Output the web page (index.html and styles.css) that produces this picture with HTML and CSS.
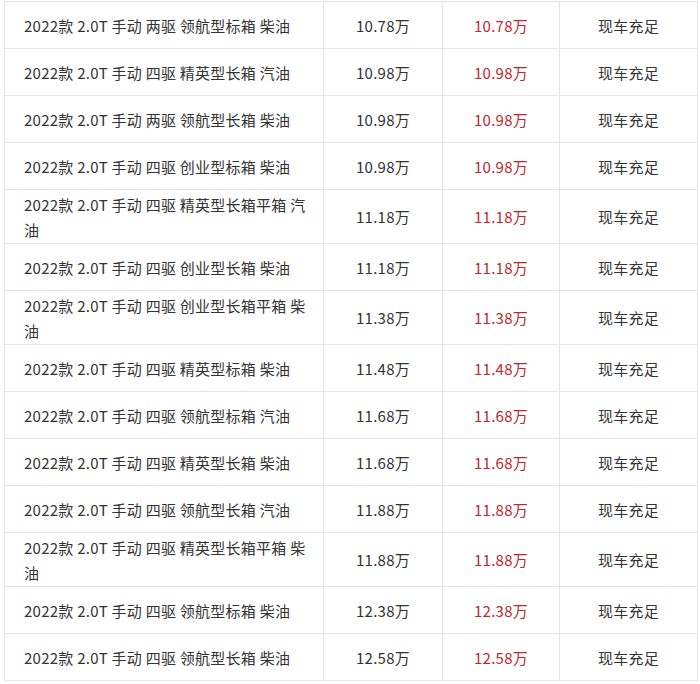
FILE: index.html
```html
<!DOCTYPE html>
<html lang="zh-CN">
<head>
    <meta charset="UTF-8">
    <meta name="viewport" content="width=device-width, initial-scale=1.0">
    <title>2022款 报价表</title>
    <link rel="stylesheet" href="styles.css">
</head>
<body>
    <table class="price-table">
        <colgroup>
            <col class="col-model">
            <col class="col-guide">
            <col class="col-deal">
            <col class="col-stock">
        </colgroup>
        <tbody>
            <tr><td class="model">2022款 2.0T 手动 两驱 领航型标箱 柴油</td><td>10.78万</td><td class="deal">10.78万</td><td>现车充足</td></tr>
            <tr><td class="model">2022款 2.0T 手动 四驱 精英型长箱 汽油</td><td>10.98万</td><td class="deal">10.98万</td><td>现车充足</td></tr>
            <tr><td class="model">2022款 2.0T 手动 两驱 领航型长箱 柴油</td><td>10.98万</td><td class="deal">10.98万</td><td>现车充足</td></tr>
            <tr><td class="model">2022款 2.0T 手动 四驱 创业型标箱 柴油</td><td>10.98万</td><td class="deal">10.98万</td><td>现车充足</td></tr>
            <tr><td class="model">2022款 2.0T 手动 四驱 精英型长箱平箱 汽油</td><td>11.18万</td><td class="deal">11.18万</td><td>现车充足</td></tr>
            <tr><td class="model">2022款 2.0T 手动 四驱 创业型长箱 柴油</td><td>11.18万</td><td class="deal">11.18万</td><td>现车充足</td></tr>
            <tr><td class="model">2022款 2.0T 手动 四驱 创业型长箱平箱 柴油</td><td>11.38万</td><td class="deal">11.38万</td><td>现车充足</td></tr>
            <tr><td class="model">2022款 2.0T 手动 四驱 精英型标箱 柴油</td><td>11.48万</td><td class="deal">11.48万</td><td>现车充足</td></tr>
            <tr><td class="model">2022款 2.0T 手动 四驱 领航型标箱 汽油</td><td>11.68万</td><td class="deal">11.68万</td><td>现车充足</td></tr>
            <tr><td class="model">2022款 2.0T 手动 四驱 精英型长箱 柴油</td><td>11.68万</td><td class="deal">11.68万</td><td>现车充足</td></tr>
            <tr><td class="model">2022款 2.0T 手动 四驱 领航型长箱 汽油</td><td>11.88万</td><td class="deal">11.88万</td><td>现车充足</td></tr>
            <tr><td class="model">2022款 2.0T 手动 四驱 精英型长箱平箱 柴油</td><td>11.88万</td><td class="deal">11.88万</td><td>现车充足</td></tr>
            <tr><td class="model">2022款 2.0T 手动 四驱 领航型标箱 柴油</td><td>12.38万</td><td class="deal">12.38万</td><td>现车充足</td></tr>
            <tr><td class="model">2022款 2.0T 手动 四驱 领航型长箱 柴油</td><td>12.58万</td><td class="deal">12.58万</td><td>现车充足</td></tr>
        </tbody>
    </table>
</body>
</html>
```

FILE: styles.css
```css
body {
    margin: 0;
    padding: 1px 0 0 4px;
    background-color: #fff;
    font-family: "Microsoft YaHei", "Noto Sans CJK SC", sans-serif;
    font-size: 15px;
    color: #333;
}
.price-table {
    width: 693px;
    border-collapse: collapse;
    table-layout: fixed;
}
.col-model {
    width: 319px;
}
.col-guide {
    width: 119px;
}
.col-deal {
    width: 117px;
}
.col-stock {
    width: 138px;
}
.price-table td {
    height: 43px;
    padding: 1.5px 19px;
    border: 1px solid #e6e6e6;
    line-height: 25px;
    letter-spacing: 0.25px;
    text-align: center;
    vertical-align: middle;
}
.price-table td.model {
    padding-right: 12px;
    text-align: left;
}
.price-table td.deal {
    color: #c0282d;
}
```
